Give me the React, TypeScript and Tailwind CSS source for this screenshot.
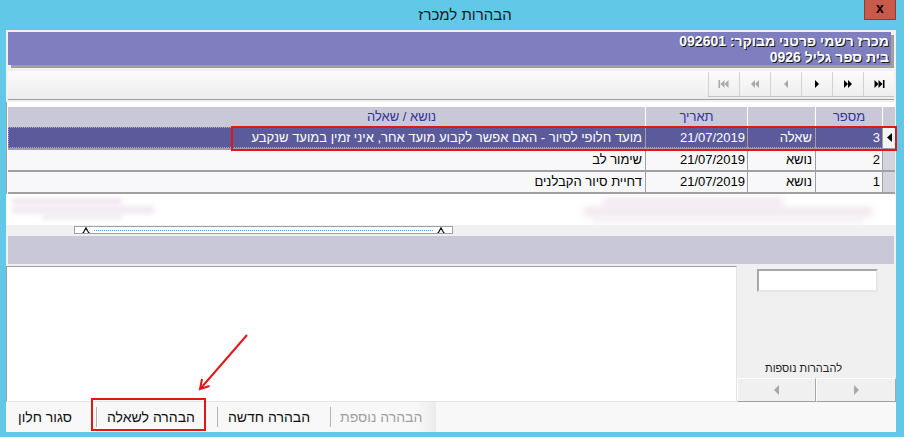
import React from 'react';

type Row = { n: string; type: string; date: string; subject: string; selected?: boolean };

const rows: Row[] = [
  { n: '3', type: 'שאלה', date: '21/07/2019', subject: 'מועד חלופי לסיור - האם אפשר לקבוע מועד אחר, איני זמין במועד שנקבע', selected: true },
  { n: '2', type: 'נושא', date: '21/07/2019', subject: 'שימור לב' },
  { n: '1', type: 'נושא', date: '21/07/2019', subject: 'דחיית סיור הקבלנים' },
];

function NavIcon({ kind, color }: { kind: string; color: string }) {
  return (
    <svg width="12" height="8" viewBox="0 0 12 8" fill={color}>
      {kind === 'first' && (
        <>
          <rect x="0.5" y="0" width="1.6" height="8" />
          <polygon points="6.5,0 2.5,4 6.5,8" />
          <polygon points="10.5,0 6.5,4 10.5,8" />
        </>
      )}
      {kind === 'prev2' && (
        <>
          <polygon points="6,0 2,4 6,8" />
          <polygon points="10,0 6,4 10,8" />
        </>
      )}
      {kind === 'prev' && <polygon points="8,0 4,4 8,8" />}
      {kind === 'next' && <polygon points="4,0 8,4 4,8" />}
      {kind === 'next2' && (
        <>
          <polygon points="2,0 6,4 2,8" />
          <polygon points="6,0 10,4 6,8" />
        </>
      )}
      {kind === 'last' && (
        <>
          <polygon points="1.5,0 5.5,4 1.5,8" />
          <polygon points="5.5,0 9.5,4 5.5,8" />
          <rect x="9.9" y="0" width="1.6" height="8" />
        </>
      )}
    </svg>
  );
}

function Caret() {
  return (
    <svg width="8" height="6" viewBox="0 0 8 6" className="shrink-0">
      <polyline points="0.5,5.5 1.5,5.5 4,0.8 6.5,5.5 7.5,5.5" fill="none" stroke="#111" strokeWidth="1.2" />
    </svg>
  );
}

function Sep() {
  return <div className="self-center w-px h-[20px] bg-[#b4b4b4]" />;
}

const cols = ['w-[638px]', 'w-[102px]', 'w-[68px]', 'w-[67px]'];

export default function App() {
  const navs = [
    { k: 'first', c: '#a8a8a8' },
    { k: 'prev2', c: '#a8a8a8' },
    { k: 'prev', c: '#a8a8a8' },
    { k: 'next', c: '#000' },
    { k: 'next2', c: '#000' },
    { k: 'last', c: '#000' },
  ];

  return (
    <div className="relative w-[904px] h-[437px] overflow-hidden bg-[#62c8e8] font-['Liberation_Sans','DejaVu_Sans',Arial,sans-serif] text-[#111]">
      {/* title bar */}
      <div className="relative h-[30px] flex items-center justify-center pl-[26px]">
        <span dir="rtl" className="text-[15px] text-[#1a1a1a]">הבהרות למכרז</span>
        <div className="absolute left-[864px] top-0 w-[32px] h-[20px] bg-[#c75a4a] border border-t-0 border-[#8e3b30] flex items-center justify-center text-[14px] font-bold leading-none text-black pb-[3px]">
          x
        </div>
      </div>

      {/* client area */}
      <div className="ml-[6px] w-[890px] h-[402px] bg-[#f0f0f0] flex flex-col">
        {/* header band */}
        <div
          dir="rtl"
          className="ml-[2px] mt-[2px] w-[883px] h-[33px] shrink-0 bg-[#7f7fbf] shadow-[3px_3px_0_#a0a0a0] pt-[1px] pr-[2px] text-right text-white font-bold text-[14px] leading-[16px] [text-shadow:1px_1px_0_#1a1a1a]"
        >
          <div>מכרז רשמי פרטני מבוקר: 092601</div>
          <div>בית ספר גליל 0926</div>
        </div>

        {/* toolbar with record navigation */}
        <div className="ml-[2px] mt-[6px] w-[886px] h-[29px] shrink-0 bg-linear-to-b from-[#fcfcfc] to-[#ececec] border-b border-[#a0a0a0] flex justify-end items-start pt-[1px]">
          <div className="flex h-[25px] border-b border-[#c4c4c4]">
            {navs.map((b) => (
              <div key={b.k} className="w-[31px] h-full flex items-center justify-center border-l border-[#d2d2d2]">
                <NavIcon kind={b.k} color={b.c} />
              </div>
            ))}
          </div>
        </div>

        {/* grid */}
        <div className="mt-[2px] w-[889px] shrink-0 border-l border-[#a0a0a0] bg-white pl-[1px] text-[13px]">
          <div className="h-[5px]" />
          <div className="flex h-[20px] bg-[#c8c8d8] text-[#33339a]">
            <div className={`${cols[0]} border-r border-white flex items-center justify-center pl-[150px]`} dir="rtl">
              נושא / שאלה
            </div>
            <div className={`${cols[1]} border-r border-white flex items-center justify-center`}>תאריך</div>
            <div className={`${cols[2]} border-r border-white`} />
            <div className={`${cols[3]} border-r border-white flex items-center justify-center`}>מספר</div>
            <div className="w-[12px]" />
          </div>
          {rows.map((r) => (
            <div key={r.n} className={`flex border-b-2 border-[#a0a0a0] ${r.selected ? 'h-[23px]' : 'h-[22px]'}`}>
              <div
                className={`flex w-[875px] ${
                  r.selected
                    ? 'bg-[#5b5b9b] text-white outline-1 outline-dotted outline-[#b4ac6c] -outline-offset-1'
                    : 'bg-[#f8f8fa] text-black'
                }`}
              >
                <div dir="rtl" className={`${cols[0]} border-r border-[#a0a0a0] flex items-center pr-[3px] whitespace-nowrap overflow-hidden`}>
                  {r.subject}
                </div>
                <div className={`${cols[1]} border-r border-[#a0a0a0] flex items-center justify-end pr-[2px]`}>{r.date}</div>
                <div dir="rtl" className={`${cols[2]} border-r border-[#a0a0a0] flex items-center pr-[3px]`}>{r.type}</div>
                <div className={`${cols[3]} border-r border-[#a0a0a0] flex items-center justify-end pr-[2px]`}>{r.n}</div>
              </div>
              <div className={`w-[12px] flex items-center justify-center ${r.selected ? 'bg-[#f4f4f6]' : 'bg-[#d4d4de]'}`}>
                {r.selected && (
                  <svg width="5" height="9" viewBox="0 0 5 9">
                    <polygon points="5,0 0,4.5 5,9" fill="#000" />
                  </svg>
                )}
              </div>
            </div>
          ))}
        </div>

        {/* blurred strip */}
        <div className="h-[31px] shrink-0 bg-white flex justify-between pt-[4px] overflow-hidden">
          <div className="ml-[6px] flex flex-col gap-[2px] blur-[2px] opacity-70">
            <div className="w-[110px] h-[6px] bg-[#eedbe9]" />
            <div className="w-[142px] h-[8px] bg-[#ede0ec]" />
            <div className="ml-[30px] w-[80px] h-[3px] bg-[#dedede]" />
          </div>
          <div className="mr-[16px] w-[297px] flex flex-col gap-[2px] blur-[3px] opacity-70">
            <div className="ml-[20px] w-[180px] h-[7px] bg-[#ecdcea]" />
            <div className="w-[290px] h-[9px] bg-[#ebe0ea]" />
            <div className="ml-[10px] w-[270px] h-[5px] bg-[#ede6ec]" />
          </div>
        </div>

        {/* splitter band */}
        <div className="h-[11px] shrink-0 pt-[1px]">
          <div className="ml-[68px] w-[379px] h-[8px] border border-[#a0a0a0] bg-white flex items-center px-[7px] gap-[4px]">
            <Caret />
            <div className="flex-1 border-t border-dotted border-[#3a9cff]" />
            <Caret />
          </div>
        </div>

        <div className="ml-[2px] w-[886px] h-[28px] shrink-0 bg-[#c8c8d8]" />

        {/* lower section */}
        <div className="mt-[2px] h-[136px] shrink-0 flex">
          <div className="w-[731px] bg-white border border-[#a0a0a0] border-r-[#e4e4e4] border-b-[#e4e4e4]" />
          <div className="w-[159px] flex flex-col">
            <div className="mt-[3px] ml-[20px] w-[121px] h-[23px] bg-white border-2 border-t-[#a8a8a8] border-l-[#a8a8a8] border-r-[#e6e6e6] border-b-[#e6e6e6]" />
            <div className="flex-1" />
            <div dir="rtl" className="h-[14px] leading-[14px] pr-[54px] text-right text-[11px] text-[#222]">
              להבהרות נוספות
            </div>
            <div className="mt-[3px] h-[24px] flex">
              <div className="w-[79px] flex items-center justify-center border-t border-l border-white border-r border-b border-r-[#a8a8a8] border-b-[#a0a0a0]">
                <svg width="5" height="10" viewBox="0 0 5 10">
                  <polygon points="5,0 0,5 5,10" fill="#a8a8a8" />
                </svg>
              </div>
              <div className="w-[80px] flex items-center justify-center border-t border-l border-white border-r border-b border-r-[#a8a8a8] border-b-[#a0a0a0]">
                <svg width="5" height="10" viewBox="0 0 5 10">
                  <polygon points="0,0 5,5 0,10" fill="#a8a8a8" />
                </svg>
              </div>
            </div>
          </div>
        </div>

        {/* bottom command bar */}
        <div className="h-[30px] shrink-0 bg-[#f8f8f8] flex items-stretch text-[14px]">
          <div dir="rtl" className="w-[90px] flex items-center justify-end pl-[12px]">
            <span className="mr-auto">סגור חלון</span>
          </div>
          <Sep />
          <div dir="rtl" className="w-[120px] flex items-center pl-[10px]">
            <span className="mr-auto">הבהרה לשאלה</span>
          </div>
          <Sep />
          <div dir="rtl" className="w-[112px] flex items-center pl-[10px]">
            <span className="mr-auto">הבהרה חדשה</span>
          </div>
          <Sep />
          <div dir="rtl" className="w-[105px] flex items-center pl-[9px] text-[#a0a0a0] bg-linear-to-r from-[#f8f8f8] from-80% to-[#ececec]">
            <span className="mr-auto">הבהרה נוספת</span>
          </div>
        </div>
      </div>

      {/* annotations */}
      <div className="absolute left-[231px] top-[126px] w-[666px] h-[25px] border-2 border-[#e51515]" />
      <div className="absolute left-[91px] top-[398px] w-[115px] h-[33px] border-2 border-[#e51515]" />
      <svg className="absolute left-0 top-0 pointer-events-none" width="904" height="437">
        <line x1="247" y1="335" x2="201" y2="388" stroke="#e51515" strokeWidth="2" />
        <polyline points="202,379 200,389 209.5,386" fill="none" stroke="#e51515" strokeWidth="2" />
      </svg>
    </div>
  );
}
